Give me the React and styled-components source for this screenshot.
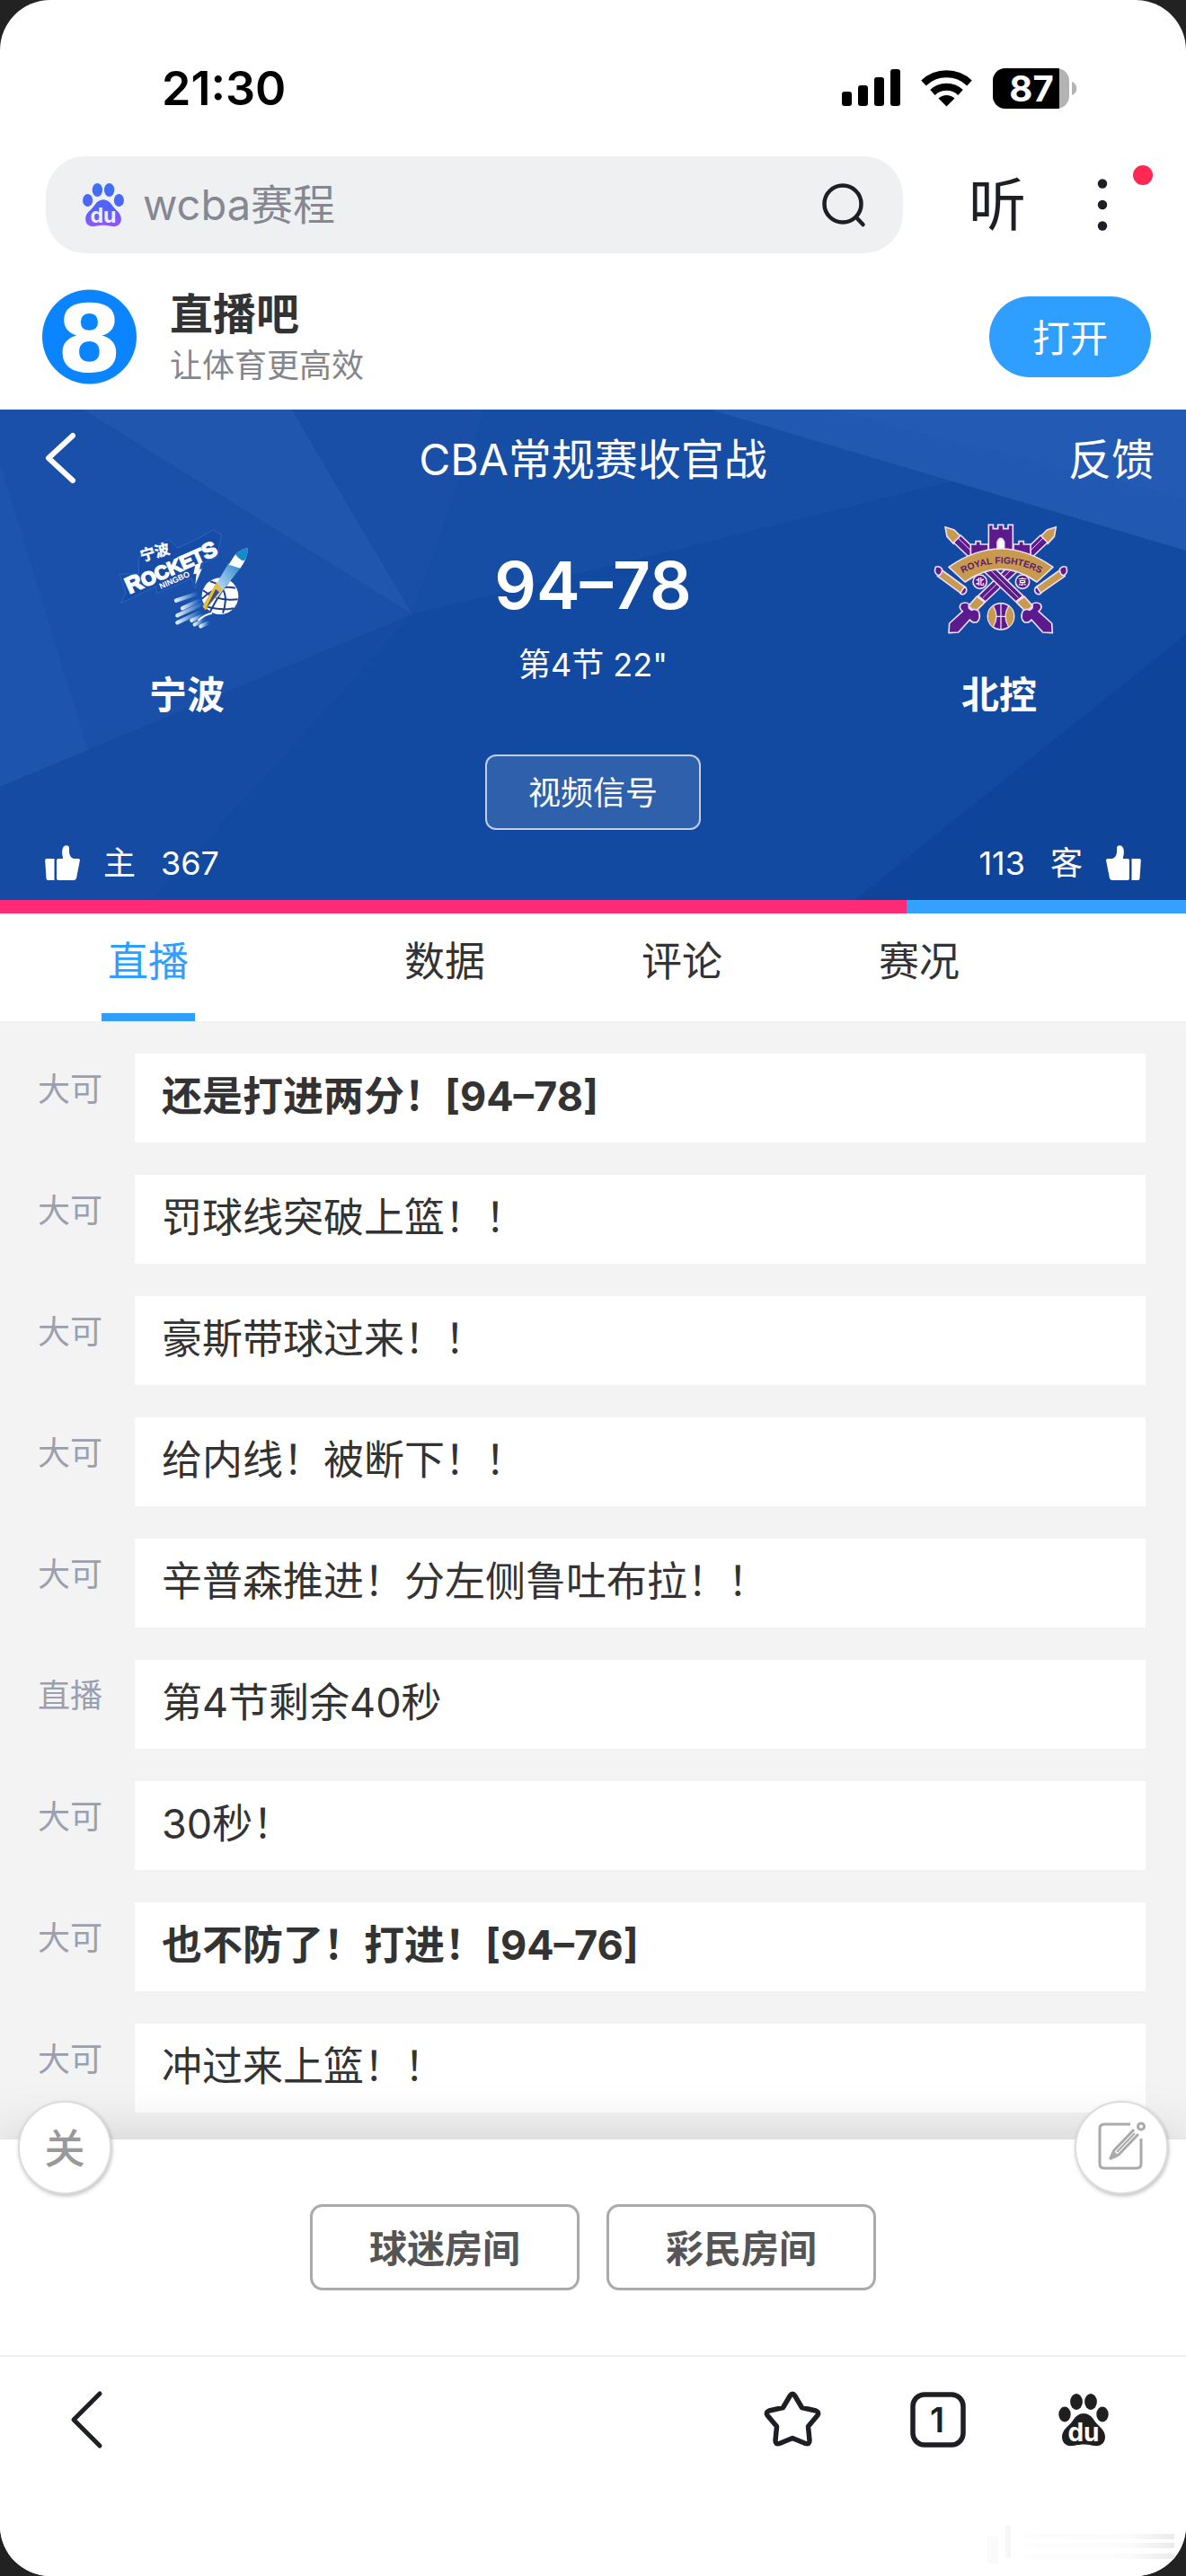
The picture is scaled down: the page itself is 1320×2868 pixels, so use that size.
import { useState } from "react";
import styled, { createGlobalStyle } from "styled-components";

const GlobalStyle = createGlobalStyle`
  * {
    box-sizing: border-box;
  }
  body {
    margin: 0;
    background-color: #222;
    font-family: Inter, "Noto Sans CJK SC", sans-serif;
    color: #333;
  }
  button {
    font-family: inherit;
    color: inherit;
    border: none;
    padding: 0;
    background: none;
    cursor: pointer;
  }
  svg {
    display: block;
    flex-shrink: 0;
    overflow: visible;
  }
`;

const Page = styled.div`
  min-height: 100vh;
  display: flex;
  flex-direction: column;
  background-color: white;
  border-radius: 56px;
  overflow: hidden;
  position: relative;
`;

const StatusBar = styled.div`
  height: 174px;
  padding: 22px 121px 0 180px;
  display: flex;
  align-items: center;
  justify-content: space-between;
  color: black;
`;

const Time = styled.span`
  font-size: 52px;
  font-weight: 600;
`;

const StatusIcons = styled.div`
  display: flex;
  align-items: center;
  gap: 23px;
`;

const SearchRow = styled.div`
  height: 108px;
  padding: 0 63px 0 51px;
  display: flex;
  align-items: center;
`;

const SearchBar = styled.label`
  flex: 1;
  min-width: 0;
  height: 108px;
  padding: 0 40px;
  display: flex;
  align-items: center;
  background-color: #eff0f2;
  border-radius: 44px;
`;

const SearchInput = styled.input`
  flex: 1;
  min-width: 0;
  margin: 0 20px;
  padding: 0;
  border: none;
  outline: none;
  background: none;
  font-family: inherit;
  font-size: 47px;
  line-height: 60px;
  color: #858892;
`;

const ListenButton = styled.button`
  margin-left: 73px;
  font-size: 64px;
  line-height: 80px;
  color: #1e1f24;
`;

const MoreButton = styled.button`
  margin-left: 55px;
  width: 60px;
  height: 80px;
  display: flex;
  align-items: center;
  justify-content: center;
  position: relative;
`;

const Badge = styled.span`
  width: 22px;
  height: 22px;
  border-radius: 50%;
  background-color: #ff2850;
  position: absolute;
  top: -4px;
  right: -26px;
`;

const AppBanner = styled.div`
  height: 174px;
  padding: 12px 39px 0 47px;
  display: flex;
  align-items: center;
`;

const AppText = styled.div`
  flex: 1;
  margin-left: 36px;
  padding-top: 4px;
  display: flex;
  flex-direction: column;
`;

const AppName = styled.span`
  font-size: 48px;
  line-height: 60px;
  font-weight: 700;
`;

const AppSlogan = styled.span`
  font-size: 36px;
  line-height: 54px;
  color: #84868c;
`;

const OpenButton = styled.button`
  width: 180px;
  height: 90px;
  padding-bottom: 4px;
  border-radius: 45px;
  background-color: #2e9fff;
  color: white;
  font-size: 42px;
`;

const Hero = styled.section`
  display: grid;
  background-color: #134aa1;
  color: white;
`;

const HeroFacets = styled.svg`
  grid-area: 1 / 1;
  width: 100%;
  height: 100%;
  min-height: 0;
`;

const HeroBody = styled.div`
  grid-area: 1 / 1;
  display: flex;
  flex-direction: column;
  z-index: 1;
`;

const HeroBar = styled.div`
  height: 104px;
  padding: 0 35px;
  display: grid;
  grid-template-columns: 1fr auto 1fr;
  align-items: center;
  font-size: 48px;
`;

const HeroTitle = styled.h1`
  margin: 0;
  font-size: 48px;
  font-weight: 400;
`;

const BackButton = styled.button`
  justify-self: start;
  padding: 4px 14px 0;
`;

const FeedbackLink = styled.a`
  justify-self: end;
  color: white;
  text-decoration: none;
`;

const Match = styled.div`
  display: grid;
  grid-template-columns: 416fr 488fr 416fr;
`;

const Team = styled.div`
  display: flex;
  flex-direction: column;
  align-items: center;
  gap: 24px;
`;

const TeamName = styled.span`
  font-size: 42px;
  line-height: 60px;
  font-weight: 700;
`;

const Result = styled.div`
  padding-top: 50px;
  display: flex;
  flex-direction: column;
  align-items: center;
  gap: 22px;
`;

const Score = styled.span`
  font-size: 73px;
  line-height: 84px;
  font-weight: 600;
`;

const Period = styled.span`
  font-size: 36px;
  line-height: 48px;
`;

const VideoButton = styled.button`
  align-self: center;
  margin-top: 36px;
  width: 240px;
  height: 84px;
  padding-bottom: 4px;
  border: 2px solid rgba(255, 255, 255, 0.7);
  border-radius: 12px;
  background-color: rgba(255, 255, 255, 0.12);
  color: white;
  font-size: 36px;
`;

const Votes = styled.div`
  height: 78px;
  padding: 0 50px 4px;
  display: flex;
  align-items: center;
  justify-content: space-between;
`;

const Vote = styled.button`
  display: flex;
  flex-direction: ${({ $reverse }) => ($reverse ? "row-reverse" : "row")};
  align-items: center;
  gap: 26px;
  color: white;
  font-size: 36px;
`;

const VoteLabel = styled.span`
  display: flex;
  flex-direction: inherit;
  align-items: baseline;
  gap: 28px;
  line-height: 48px;
`;

const VoteBar = styled.div`
  height: 15px;
  display: flex;
  background-color: #33a1ff;
`;

const VoteShare = styled.div`
  background-color: #ff2a75;
`;

const Tabs = styled.nav`
  display: grid;
  grid-template-columns: 25fr 25fr 15fr 25fr 10fr;
  height: 120px;
`;

const Tab = styled.button`
  display: flex;
  flex-direction: column;
  align-items: center;
  justify-content: space-between;
  font-size: 45px;
  line-height: 108px;
  color: ${({ $active }) => ($active ? "#2e9fff" : "#333")};

  &::after {
    content: "";
    width: 104px;
    height: 9px;
    background-color: ${({ $active }) => ($active ? "#2e9fff" : "transparent")};
  }
`;

const Feed = styled.ul`
  margin: 0;
  padding: 36px 45px 30px 42px;
  list-style: none;
  display: flex;
  flex-direction: column;
  gap: 36px;
  background-color: #f3f3f3;
`;

const FeedItem = styled.li`
  display: flex;
`;

const Author = styled.span`
  width: 108px;
  font-size: 36px;
  line-height: 81px;
  color: #9aa0ae;
`;

const Message = styled.p`
  flex: 1;
  margin: 0;
  padding: 21px 30px 24px;
  background-color: white;
  font-size: 45px;
  line-height: 54px;
  font-weight: ${({ $bold }) => ($bold ? 700 : 400)};
`;

const Rooms = styled.div`
  height: 240px;
  display: flex;
  align-items: center;
  justify-content: center;
  gap: 30px;
  position: relative;
  background-color: white;
  box-shadow: 0 0 60px rgba(0, 0, 0, 0.17);
`;

const RoomButton = styled.button`
  width: 300px;
  height: 96px;
  padding-bottom: 4px;
  border: 3px solid #aaa;
  border-radius: 14px;
  font-size: 42px;
  font-weight: 700;
  color: #555;
`;

const RoundButton = styled.button`
  width: 104px;
  height: 104px;
  padding-bottom: 4px;
  border: 2px solid #ddd;
  border-radius: 50%;
  background-color: white;
  box-shadow: 1px 2px 4px rgba(0, 0, 0, 0.25);
  display: flex;
  align-items: center;
  justify-content: center;
  font-size: 45px;
  font-weight: 500;
  color: #999;
  position: absolute;
  top: -43px;
  ${({ $side }) => $side}: 20px;
`;

const Toolbar = styled.nav`
  flex: 1;
  min-height: 246px;
  padding: 38px 82px 0 64px;
  border-top: 2px solid #efefef;
  background-color: white;
  display: flex;
  align-items: flex-start;
  gap: 98px;
  position: relative;
`;

const ToolButton = styled.button`
  width: 64px;
  height: 64px;
  display: flex;
  align-items: center;
  justify-content: center;
  margin-right: ${({ $push }) => ($push ? "auto" : 0)};
`;

const Smudge = styled.svg`
  position: absolute;
  right: 11px;
  bottom: 12px;
`;

const SignalIcon = () => (
  <svg width="65" height="42" viewBox="0 0 65 42">
    <rect x="0" y="25" width="11" height="16" rx="3" />
    <rect x="18" y="18" width="11" height="23" rx="3" />
    <rect x="36" y="9" width="11" height="32" rx="3" />
    <rect x="54" y="0" width="11" height="41" rx="3" />
  </svg>
);

const WifiIcon = () => (
  <svg width="57" height="42" viewBox="0 0 57 42">
    <g fill="none" stroke="black" strokeWidth="8">
      <path d="M3 15.500A37 37 0 0 1 54 15.500" />
      <path d="M13 26A22.500 22.500 0 0 1 44 26" />
    </g>
    <path d="M19.500 32.500A13 13 0 0 1 37.500 32.500L28.500 41.500Z" />
  </svg>
);

const BatteryIcon = () => (
  <svg width="94" height="45" viewBox="0 0 94 45">
    <clipPath id="battery">
      <rect width="85" height="45" rx="14" />
    </clipPath>
    <g clipPath="url(#battery)">
      <rect width="85" height="45" fill="#b3b3b3" />
      <rect width="74" height="45" />
    </g>
    <path d="M88 15C95 17 95 28 88 30Z" fill="#b3b3b3" />
    <text
      x="43"
      y="37"
      fill="white"
      fontSize="40"
      fontWeight="700"
      textAnchor="middle"
    >
      87
    </text>
  </svg>
);

const PawIcon = ({ size, fill, textFill }) => (
  <svg width={size} height={size} viewBox="0 0 56 58">
    <defs>
      <linearGradient id="paw" x1="0" y1="0" x2="0" y2="58" gradientUnits="userSpaceOnUse">
        <stop offset="0.1" stopColor="#3f6ff5" />
        <stop offset="0.6" stopColor="#5562f8" />
        <stop offset="1" stopColor="#9258fb" />
      </linearGradient>
    </defs>
    <g fill={fill}>
      <ellipse cx="7" cy="23" rx="6.700" ry="8.500" />
      <ellipse cx="20" cy="9" rx="6.900" ry="9" />
      <ellipse cx="36" cy="9" rx="6.900" ry="9" />
      <ellipse cx="49" cy="23" rx="6.700" ry="8.500" />
      <path d="M28 22C33 22 37 25 40 30C44 36 52 40 52 48C52 55 47 59 40 58C34 57 31 56.500 28 56.500C25 56.500 22 57 16 58C9 59 4 55 4 48C4 40 12 36 16 30C19 25 23 22 28 22Z" />
    </g>
    <text
      x="28"
      y="53"
      fill={textFill}
      fontSize="28"
      fontWeight="700"
      textAnchor="middle"
    >
      du
    </text>
  </svg>
);

const SearchIcon = () => (
  <svg width="52" height="52" viewBox="0 0 52 52" fill="none" stroke="#1e1f24" strokeWidth="4.500" strokeLinecap="round">
    <circle cx="25" cy="25" r="20.500" />
    <path d="M40 40L47.500 48" />
  </svg>
);

const MoreIcon = () => (
  <svg width="12" height="60" viewBox="0 0 12 60" fill="#1e1f24">
    <circle cx="6" cy="6.500" r="5.200" />
    <circle cx="6" cy="30" r="5.200" />
    <circle cx="6" cy="53.500" r="5.200" />
  </svg>
);

const AppLogo = () => (
  <svg width="106" height="106" viewBox="0 0 106 106">
    <circle cx="52.500" cy="53" r="52.500" fill="#0a84ff" />
    <text
      x="52.500"
      y="92"
      fill="white"
      fontFamily="DejaVu Sans"
      fontSize="104"
      fontWeight="700"
      textAnchor="middle"
    >
      8
    </text>
  </svg>
);

const ThumbIcon = ({ flip }) => (
  <svg width="39" height="40" viewBox="0 0 39 40" fill="white">
    <g transform={flip ? undefined : "translate(39 0) scale(-1 1)"}>
      <path d="M0 16.500Q0 15 2 15H7C10 14 12 11 12 7V3C12 0 17 -1 19 3C21 8 19 12 19 15H24Q26 15 26 17V37Q26 39 24 39H7Q5 39 4 37Z" />
      <path d="M28.500 15H37Q39 15 38.800 17L37.500 37Q37.400 39 35.500 39H28.500Z" />
    </g>
  </svg>
);

const RocketsLogo = () => (
  <svg width="200" height="160" viewBox="0 0 600 480">
    <defs>
      <linearGradient id="trail" x1="1" y1="0" x2="0" y2="1">
        <stop offset="0" stopColor="#2a86cf" />
        <stop offset="1" stopColor="#e8f4fc" />
      </linearGradient>
      <linearGradient id="streak">
        <stop offset="0" stopColor="#d8ecfa" />
        <stop offset="1" stopColor="#1d60b8" />
      </linearGradient>
    </defs>
    <path
      d="M75 238L140 236L138 190L155 160L240 122L270 150L345 115L385 90L415 105L402 180L355 200L328 286L316 252L200 302L196 278L80 335L96 300Z"
      fill="#174ba6"
      stroke="#2b74d8"
      strokeWidth="2"
    />
    <g fill="white" stroke="white" fontFamily="Liberation Sans" fontWeight="700">
      <text
        transform="translate(150 196) rotate(-16)"
        fontFamily="Noto Sans CJK SC"
        fontSize="50"
        strokeWidth="1"
      >
        宁波
      </text>
      <text transform="translate(108 304) rotate(-24)" strokeWidth="5">
        <tspan fontSize="76">R</tspan>
        <tspan fontSize="64">OCKET</tspan>
        <tspan fontSize="72">S</tspan>
      </text>
      <text transform="translate(213 288) rotate(-24)" fontSize="27" stroke="none">
        NINGBO
      </text>
    </g>
    <path d="M328 206L348 198L342 222L350 220L328 272L332 236L322 238Z" fill="white" />
    <circle cx="411" cy="311" r="61" fill="white" />
    <g fill="none" stroke="#1d3f92" strokeWidth="6">
      <path d="M354 292Q400 330 470 322" />
      <path d="M362 345Q415 360 456 352" />
      <path d="M378 262Q450 280 420 368" />
      <path d="M440 262Q410 300 378 362" />
      <path d="M350 320Q400 270 462 284" />
    </g>
    <path d="M440 200L478 218L400 318L385 292Z" fill="url(#trail)" />
    <path d="M400 264L418 290L362 358L352 345Z" fill="#e5bd3c" />
    <path d="M396 288L408 298L364 352Z" fill="#344c8c" />
    <path d="M456 180Q470 158 504 150Q502 188 478 218L440 206Z" fill="white" />
    <path d="M462 172Q478 154 504 150Q504 172 494 190Q484 200 462 172Z" fill="#178bc8" />
    <g stroke="url(#streak)" strokeWidth="13" strokeLinecap="round">
      <path d="M264 326L330 304" />
      <path d="M285 352L340 326" />
      <path d="M268 376L350 338" />
      <path d="M268 400L340 366" />
      <path d="M316 392L352 376" />
      <path d="M326 406L356 390" />
      <path d="M346 412L372 400" />
    </g>
    <path d="M338 392Q360 372 384 368" stroke="white" strokeWidth="6" fill="none" />
  </svg>
);

const Sword = () => (
  <g stroke="#ecdff5" strokeWidth="5" strokeLinejoin="round">
    <path d="M120 80L150 90L172 112L148 136L126 112Z" fill="#c79a4e" />
    <path d="M172 108L148 132L356 330L380 310Z" fill="#5c1a8c" />
    <path d="M384 312L412 344L390 364L358 332Z" fill="#c79a4e" />
    <path d="M378 362Q370 386 384 398Q400 402 408 390L446 432L478 434L476 402L432 362Q446 350 438 338Q424 328 410 338Q416 350 402 358Q388 350 378 362Z" fill="#5c1a8c" />
    <path d="M162 116L364 316" fill="none" strokeWidth="3" />
  </g>
);

const FightersLogo = () => (
  <svg width="200" height="160" viewBox="0 0 600 480">
    <defs>
      <path id="ribbon" d="M158 246Q306 158 458 246" />
    </defs>
    <g transform="translate(610 0) scale(-1 1)">
      <Sword />
    </g>
    <Sword />
    <g fill="#5c1a8c" stroke="#ecdff5" strokeWidth="5">
      <path d="M205 175V138H222V128H238V138H264V175Z" />
      <path d="M348 175V138H366V128H382V138H405V175Z" />
      <path d="M265 170V73H280V86H296V73H314V86H330V73H346V170Z" />
      <path d="M294 172V130Q305 106 317 130V172Z" fill="white" />
    </g>
    <g stroke="#ecdff5" strokeWidth="5" strokeLinejoin="round">
      <path d="M132 214Q306 92 480 214L426 264Q306 178 186 264Z" fill="#c79a4e" />
      <path d="M110 225L188 282L176 304L94 244Z" fill="#c79a4e" />
      <path d="M502 225L422 282L434 304L520 244Z" fill="#c79a4e" />
      <path d="M88 214Q102 208 110 222Q108 240 98 242Q80 236 88 214Z" fill="#5c1a8c" />
      <path d="M524 214Q510 208 502 222Q504 240 514 242Q532 236 524 214Z" fill="#5c1a8c" />
      <path d="M184 280Q198 288 186 302Q178 308 170 302Z" fill="#5c1a8c" />
      <path d="M426 280Q412 288 424 302Q432 308 440 302Z" fill="#5c1a8c" />
      <circle cx="236" cy="263" r="23" fill="#5c1a8c" />
      <circle cx="378" cy="263" r="23" fill="#5c1a8c" />
      <circle cx="306" cy="379" r="44" fill="#5c1a8c" />
    </g>
    <path d="M280 344Q302 379 280 414Q264 402 264 379Q264 356 280 344Z" fill="#c79a4e" />
    <path d="M332 344Q310 379 332 414Q348 402 348 379Q348 356 332 344Z" fill="#c79a4e" />
    <path d="M280 344Q302 379 280 414M332 344Q310 379 332 414M306 336V422M291 379H321" fill="none" stroke="#ecdff5" strokeWidth="4" />
    <text fontFamily="Liberation Sans" fontSize="31" fontWeight="700" fill="#5c1a6c">
      <textPath href="#ribbon" startOffset="50%" textAnchor="middle">
        ROYAL FIGHTERS
      </textPath>
    </text>
    <g fill="white" fontFamily="Noto Sans CJK SC" fontSize="28" fontWeight="700" textAnchor="middle">
      <text x="236" y="274">北</text>
      <text x="378" y="274">京</text>
    </g>
  </svg>
);

const ChevronIcon = ({ color, width, height, stroke }) => (
  <svg width={width} height={height} viewBox={`0 0 ${width} ${height}`} fill="none" stroke={color} strokeWidth={stroke} strokeLinecap="round" strokeLinejoin="round">
    <path d={`M${width - 4} 3L5 ${height / 2}L${width - 4} ${height - 3}`} />
  </svg>
);

const EditIcon = () => (
  <svg width="56" height="56" viewBox="0 0 56 56" fill="none" stroke="#aaa" strokeWidth="3" strokeLinejoin="round">
    <path d="M38 4H9Q4 4 4 9V48Q4 53 9 53H45Q50 53 50 48V20" />
    <path d="M42 10L20 33L16 42L25 38L47 15" />
    <path d="M43 14L23 35" strokeWidth="2" />
    <circle cx="50" cy="6.500" r="3.500" />
    <path d="M16 42L19 35L23 39Z" fill="#aaa" />
  </svg>
);

const StarIcon = () => (
  <svg width="64" height="64" viewBox="0 0 64 64" fill="none" stroke="#1e1f24" strokeWidth="5.500" strokeLinejoin="round">
    <path d="M29.500 5Q32 1.500 34.500 5L42.500 18.500L58 22Q62 23.500 60 27L49.500 39.500L51 55Q51 60 46.500 58.500L32 52.500L17.500 58.500Q13 60 13 55L14.500 39.500L4 27Q2 23.500 6 22L21.500 18.500Z" />
  </svg>
);

const PagesIcon = () => (
  <svg width="64" height="64" viewBox="0 0 64 64">
    <rect x="4" y="4" width="56" height="56" rx="13" fill="none" stroke="#1e1f24" strokeWidth="5.500" />
    <text x="31" y="46" fontSize="38" fontWeight="600" fill="#1e1f24" textAnchor="middle">
      1
    </text>
  </svg>
);

const tabs = ["直播", "数据", "评论", "赛况"];

const messages = [
  { author: "大可", text: "还是打进两分！[94–78]", bold: true },
  { author: "大可", text: "罚球线突破上篮！！" },
  { author: "大可", text: "豪斯带球过来！！" },
  { author: "大可", text: "给内线！被断下！！" },
  { author: "大可", text: "辛普森推进！分左侧鲁吐布拉！！" },
  { author: "直播", text: "第4节剩余40秒" },
  { author: "大可", text: "30秒！" },
  { author: "大可", text: "也不防了！打进！[94–76]", bold: true },
  { author: "大可", text: "冲过来上篮！！" },
];

const votes = { home: 367, away: 113 };

const App = () => {
  const [active, setActive] = useState("直播");
  const homeShare = (votes.home / (votes.home + votes.away)) * 100;
  return (
    <>
      <GlobalStyle />
      <Page>
        <StatusBar>
          <Time>21:30</Time>
          <StatusIcons>
            <SignalIcon />
            <WifiIcon />
            <BatteryIcon />
          </StatusIcons>
        </StatusBar>
        <SearchRow>
          <SearchBar>
            <PawIcon size={48} fill="url(#paw)" textFill="#eff0f2" />
            <SearchInput aria-label="搜索" defaultValue="wcba赛程" />
            <SearchIcon />
          </SearchBar>
          <ListenButton>听</ListenButton>
          <MoreButton aria-label="更多">
            <MoreIcon />
            <Badge />
          </MoreButton>
        </SearchRow>
        <AppBanner>
          <AppLogo />
          <AppText>
            <AppName>直播吧</AppName>
            <AppSlogan>让体育更高效</AppSlogan>
          </AppText>
          <OpenButton>打开</OpenButton>
        </AppBanner>
        <Hero>
          <HeroFacets viewBox="0 0 1320 546" preserveAspectRatio="none">
            <path d="M0 0H92L459 228L0 420Z" fill="#1a50a9" />
            <path d="M0 60L101 389L0 420Z" fill="#1d54ad" />
            <path d="M92 0H325L459 228Z" fill="#2056ad" />
            <path d="M325 0H540L459 228Z" fill="#194fa6" />
            <path d="M540 0H790L1060 80L459 228Z" fill="#164da5" />
            <path d="M790 0H1320V157Z" fill="#2158b1" />
            <path d="M920 0H1320V100Z" fill="#235ab3" />
            <path d="M459 228L0 420V546H170Z" fill="#154ba3" />
            <path d="M1320 250L951 546H1320Z" fill="#0f449b" />
          </HeroFacets>
          <HeroBody>
            <HeroBar>
              <BackButton aria-label="返回">
                <ChevronIcon color="white" width={36} height={56} stroke={6} />
              </BackButton>
              <HeroTitle>CBA常规赛收官战</HeroTitle>
              <FeedbackLink href="#feedback">反馈</FeedbackLink>
            </HeroBar>
            <Match>
              <Team>
                <RocketsLogo />
                <TeamName>宁波</TeamName>
              </Team>
              <Result>
                <Score>94–78</Score>
                <Period>第4节 22"</Period>
              </Result>
              <Team>
                <FightersLogo />
                <TeamName>北控</TeamName>
              </Team>
            </Match>
            <VideoButton>视频信号</VideoButton>
            <Votes>
              <Vote>
                <ThumbIcon />
                <VoteLabel>
                  <span>主</span>
                  <span>{votes.home}</span>
                </VoteLabel>
              </Vote>
              <Vote $reverse>
                <ThumbIcon flip />
                <VoteLabel>
                  <span>客</span>
                  <span>{votes.away}</span>
                </VoteLabel>
              </Vote>
            </Votes>
          </HeroBody>
        </Hero>
        <VoteBar>
          <VoteShare style={{ width: `${homeShare}%` }} />
        </VoteBar>
        <Tabs>
          {tabs.map((tab) => (
            <Tab
              key={tab}
              $active={tab === active}
              onClick={() => setActive(tab)}
            >
              {tab}
            </Tab>
          ))}
        </Tabs>
        <Feed>
          {messages.map(({ author, text, bold }) => (
            <FeedItem key={text}>
              <Author>{author}</Author>
              <Message $bold={bold}>{text}</Message>
            </FeedItem>
          ))}
        </Feed>
        <Rooms>
          <RoundButton $side="left">关</RoundButton>
          <RoomButton>球迷房间</RoomButton>
          <RoomButton>彩民房间</RoomButton>
          <RoundButton $side="right" aria-label="写评论">
            <EditIcon />
          </RoundButton>
        </Rooms>
        <Toolbar>
          <ToolButton $push aria-label="后退">
            <ChevronIcon color="#1e1f24" width={38} height={64} stroke={5} />
          </ToolButton>
          <ToolButton aria-label="收藏">
            <StarIcon />
          </ToolButton>
          <ToolButton aria-label="窗口">
            <PagesIcon />
          </ToolButton>
          <ToolButton aria-label="首页">
            <PawIcon size={58} fill="#1f1f1f" textFill="white" />
          </ToolButton>
          <Smudge width="210" height="44" viewBox="0 0 210 44">
            <defs>
              <linearGradient id="fade">
                <stop offset="0" stopColor="#fdfdfd" />
                <stop offset="0.7" stopColor="#fbfbfb" />
                <stop offset="1" stopColor="#ebebeb" />
              </linearGradient>
            </defs>
            <rect x="0" y="12" width="12" height="30" fill="#fafafa" />
            <rect x="20" y="0" width="6" height="36" fill="#f7f7f7" />
            <rect x="40" y="9" width="168" height="6" fill="url(#fade)" />
            <rect x="40" y="19" width="168" height="6" fill="url(#fade)" />
            <rect x="40" y="31" width="168" height="6" fill="url(#fade)" />
          </Smudge>
        </Toolbar>
      </Page>
    </>
  );
};

export default App;
